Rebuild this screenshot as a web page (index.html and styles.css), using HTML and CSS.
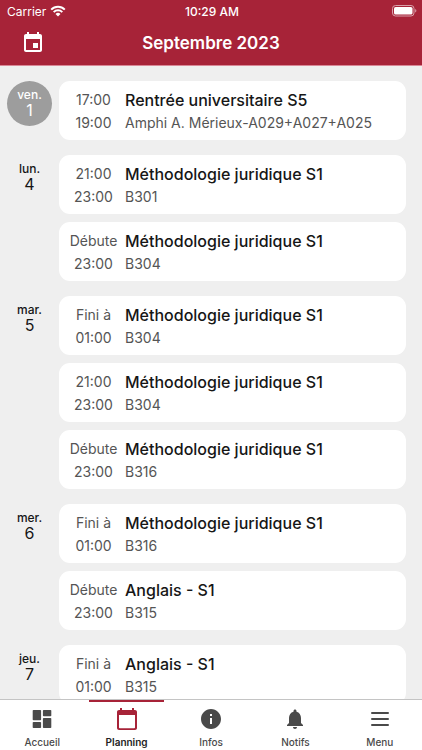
FILE: index.html
```html
<!DOCTYPE html>
<html lang="fr">
<head>
<meta charset="utf-8">
<meta name="viewport" content="width=device-width, initial-scale=1">
<title>Planning</title>
<link rel="stylesheet" href="styles.css">
</head>
<body>
<div class="app">
  <header class="header">
    <div class="status">
      <div class="carrier">
        <span>Carrier</span>
        <svg class="wifi" viewBox="0 0 16 12" aria-hidden="true"><path d="M1.200 4.600a9.600 9.600 0 0 1 13.600 0"/><path d="M3.700 7.100a6.100 6.100 0 0 1 8.600 0"/><path class="solid" d="M5.500 9a3.500 3.500 0 0 1 5 0L8 11.500z"/></svg>
      </div>
      <span class="clock">10:29 AM</span>
      <svg class="battery" viewBox="0 0 25 12" aria-hidden="true"><rect class="shell" x=".5" y=".5" width="21.5" height="10.5" rx="3"/><rect x="2" y="2" width="18.5" height="7.5" rx="1.6"/><path class="tip" d="M23.2 4v3.600c1.600-.6 1.600-3 0-3.600z"/></svg>
    </div>
    <div class="bar">
      <button class="today" type="button" aria-label="Aujourd'hui"><svg viewBox="0 0 24 24"><path d="M17 12h-5v5h5v-5zM16 1v2H8V1H6v2H5c-1.100 0-2 .9-2 2v14c0 1.100.9 2 2 2h14c1.100 0 2-.9 2-2V5c0-1.100-.9-2-2-2h-1V1h-2zm3 18H5V8h14v11z"/></svg></button>
      <h1>Septembre 2023</h1>
    </div>
  </header>

  <main class="agenda">
    <section class="day">
      <div class="date past"><span class="name">ven.</span><span class="num">1</span></div>
      <div class="events">
        <article class="event"><div class="time"><span>17:00</span><span>19:00</span></div><div class="info"><h2>Rentrée universitaire S5</h2><p>Amphi A. Mérieux-A029+A027+A025</p></div></article>
      </div>
    </section>
    <section class="day">
      <div class="date"><span class="name">lun.</span><span class="num">4</span></div>
      <div class="events">
        <article class="event"><div class="time"><span>21:00</span><span>23:00</span></div><div class="info"><h2>Méthodologie juridique S1</h2><p>B301</p></div></article>
        <article class="event"><div class="time"><span>Débute</span><span>23:00</span></div><div class="info"><h2>Méthodologie juridique S1</h2><p>B304</p></div></article>
      </div>
    </section>
    <section class="day">
      <div class="date"><span class="name">mar.</span><span class="num">5</span></div>
      <div class="events">
        <article class="event"><div class="time"><span>Fini à</span><span>01:00</span></div><div class="info"><h2>Méthodologie juridique S1</h2><p>B304</p></div></article>
        <article class="event"><div class="time"><span>21:00</span><span>23:00</span></div><div class="info"><h2>Méthodologie juridique S1</h2><p>B304</p></div></article>
        <article class="event"><div class="time"><span>Débute</span><span>23:00</span></div><div class="info"><h2>Méthodologie juridique S1</h2><p>B316</p></div></article>
      </div>
    </section>
    <section class="day">
      <div class="date"><span class="name">mer.</span><span class="num">6</span></div>
      <div class="events">
        <article class="event"><div class="time"><span>Fini à</span><span>01:00</span></div><div class="info"><h2>Méthodologie juridique S1</h2><p>B316</p></div></article>
        <article class="event"><div class="time"><span>Débute</span><span>23:00</span></div><div class="info"><h2>Anglais - S1</h2><p>B315</p></div></article>
      </div>
    </section>
    <section class="day">
      <div class="date"><span class="name">jeu.</span><span class="num">7</span></div>
      <div class="events">
        <article class="event"><div class="time"><span>Fini à</span><span>01:00</span></div><div class="info"><h2>Anglais - S1</h2><p>B315</p></div></article>
      </div>
    </section>
  </main>

  <nav class="tabs">
    <a class="tab" href="#accueil"><svg viewBox="0 0 24 24" aria-hidden="true"><rect x="2.700" y="3" width="8.400" height="10.200" rx=".8"/><rect x="12.900" y="3" width="8.400" height="6.200" rx=".8"/><rect x="12.900" y="11" width="8.400" height="10" rx=".8"/><rect x="2.700" y="15" width="8.400" height="6" rx=".8"/></svg><span>Accueil</span></a>
    <a class="tab active" href="#planning" aria-current="page"><svg viewBox="0 0 24 24" aria-hidden="true"><path d="M20 3h-1V1h-2v2H7V1H5v2H4c-1.100 0-2 .9-2 2v16c0 1.100.9 2 2 2h16c1.100 0 2-.9 2-2V5c0-1.100-.9-2-2-2zm-.8 18.200H4.800c-.5 0-.8-.3-.8-.8V8h16v12.400c0 .5-.3.8-.8.8z"/></svg><span>Planning</span></a>
    <a class="tab" href="#infos"><svg viewBox="0 0 24 24" aria-hidden="true"><path d="M12 2C6.480 2 2 6.480 2 12s4.480 10 10 10 10-4.480 10-10S17.520 2 12 2zm1 15h-2v-6h2v6zm0-8h-2V7h2v2z"/></svg><span>Infos</span></a>
    <a class="tab" href="#notifs"><svg viewBox="0 0 24 24" aria-hidden="true"><path d="M12 22c1.100 0 2-.9 2-2h-4c0 1.100.89 2 2 2zm6-6v-5c0-3.070-1.640-5.640-4.500-6.320V4c0-.83-.67-1.500-1.500-1.500s-1.500.67-1.500 1.500v.68C7.630 5.360 6 7.920 6 11v5l-2 2v1h16v-1l-2-2z"/></svg><span>Notifs</span></a>
    <a class="tab" href="#menu"><svg viewBox="0 0 24 24" aria-hidden="true"><rect x="3" y="5" width="18" height="2" rx="1"/><rect x="3" y="11" width="18" height="2" rx="1"/><rect x="3" y="17" width="18" height="2" rx="1"/></svg><span>Menu</span></a>
  </nav>
</div>
</body>
</html>
```
FILE: styles.css
```css
* { box-sizing: border-box; }

body {
  margin: 0;
  font-family: Inter, "Liberation Sans", sans-serif;
  color: #161616;
  background: #efefef;
}

h1, h2, p { margin: 0; }

.app {
  display: flex;
  flex-direction: column;
  height: 100vh;
}

.header {
  flex: none;
  color: #fff;
  background: #a72338;
  border-bottom: 1px solid #d98796;
}

.status {
  display: grid;
  grid-template-columns: 1fr auto 1fr;
  align-items: center;
  height: 22px;
  padding: 0 5px 0 7px;
  font-size: 12px;
}

.carrier { display: flex; align-items: center; gap: 4px; }
.clock { font-weight: 500; }
.wifi { width: 16px; height: 12px; fill: none; stroke: #fff; stroke-width: 2; }
.wifi .solid { fill: #fff; stroke: none; }
.battery { justify-self: end; width: 25px; height: 12px; fill: #fff; }
.battery .shell { fill: none; stroke: #d9a0aa; }
.battery .tip { fill: #d9a0aa; }

.bar {
  display: grid;
  grid-template-columns: 66px 1fr 66px;
  align-items: center;
  height: 43px;
  padding-bottom: 1px;
}

.today {
  justify-self: center;
  display: flex;
  padding: 0;
  border: 0;
  background: none;
}
.today svg { width: 24px; height: 24px; fill: #fff; }

h1 {
  font-size: 17px;
  font-weight: 600;
  text-align: center;
}

.agenda {
  flex: 1;
  min-height: 0;
  overflow: hidden;
  display: flex;
  flex-direction: column;
  gap: 15px;
  padding: 15px 16px 0 0;
}

.day { flex: none; display: flex; }

.date {
  flex: none;
  display: flex;
  flex-direction: column;
  align-items: center;
  width: 45px;
  height: 45px;
  margin: 0 7px;
  padding-top: 6px;
  border-radius: 50%;
}
.date.past { color: #fff; background: #9d9d9d; }
.name { font-size: 12px; line-height: 15px; font-weight: 500; }
.num { font-size: 16px; line-height: 17px; }

.events {
  flex: 1;
  display: flex;
  flex-direction: column;
  gap: 8px;
}

.event {
  display: flex;
  height: 59px;
  padding: 7px 8px;
  border-radius: 11px;
  background: #fff;
}

.time {
  display: flex;
  flex-direction: column;
  align-items: center;
  width: 53px;
  margin-right: 5px;
  font-size: 14px;
  line-height: 23px;
  color: #555;
}

h2 { font-size: 16px; line-height: 24px; font-weight: 500; }
.info p { font-size: 14px; line-height: 21px; color: #555; }

.tabs {
  flex: none;
  display: flex;
  height: 51px;
  background: #fff;
  border-top: 1px solid #c4c4c4;
}

.tab {
  flex: 1;
  display: flex;
  flex-direction: column;
  align-items: center;
  gap: 4px;
  margin: 0 5px;
  padding-top: 7px;
  font-size: 10px;
  line-height: 14px;
  font-weight: 500;
  color: #4a4a4a;
  text-decoration: none;
}
.tab svg { width: 24px; height: 24px; fill: #4a4a4a; }
.tab.active { font-weight: 600; color: #222; box-shadow: inset 0 2px #a72338; }
.tab.active svg { fill: #a72338; }
```
